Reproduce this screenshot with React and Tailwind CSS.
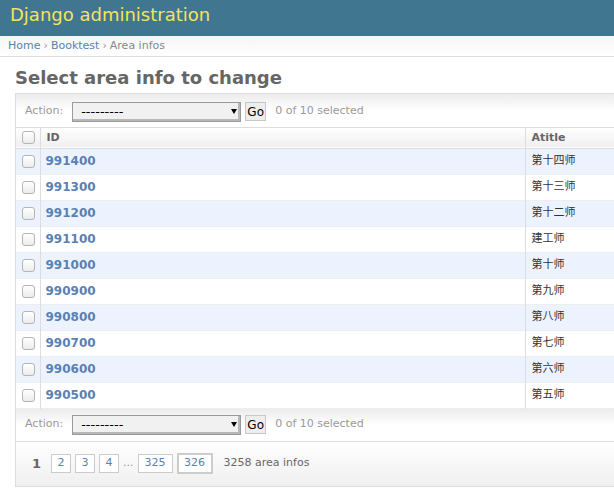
import React from 'react';

const rows = [
  ['991400', '第十四师'],
  ['991300', '第十三师'],
  ['991200', '第十二师'],
  ['991100', '建工师'],
  ['991000', '第十师'],
  ['990900', '第九师'],
  ['990800', '第八师'],
  ['990700', '第七师'],
  ['990600', '第六师'],
  ['990500', '第五师'],
];

const Check = () => (
  <div className="w-[13px] h-[13px] rounded-[3px] border border-[#b5b5b5] bg-gradient-to-b from-white to-[#ececec]" />
);

const Actions = ({ top }) => (
  <div className={`${top ? 'h-[34px] pt-[2px]' : 'h-[33px]'} flex items-center pl-[9px] bg-gradient-to-b from-[#ececec] via-white to-white border-b border-[#ddd]`}>
    <span className="text-[11px] text-[#999]">Action:</span>
    <div className="ml-[9px] w-[169px] h-[20px] flex items-center border border-[#9a9a9a] bg-[#f1f1f1] relative shadow-[inset_-2px_-2px_0_#b8b8b8]">
      <span className="pl-[8px] text-[13px] text-black leading-none">---------</span>
      <span className="absolute right-[3px] top-[6px] w-0 h-0 border-l-[3.5px] border-r-[3.5px] border-t-[5px] border-l-transparent border-r-transparent border-t-black" />
    </div>
    <div className="ml-[4px] w-[21px] h-[19px] flex items-center justify-center border border-[#c8c8c8] bg-[#eee] text-[12px] text-black">Go</div>
    <span className="ml-[9px] text-[11px] text-[#999]">0 of 10 selected</span>
  </div>
);

export default function App() {
  return (
    <div className="w-[614px] h-[491px] overflow-hidden bg-white font-['DejaVu_Sans','Noto_Sans_CJK_SC',sans-serif]">
      <div className="h-[36px] bg-[#417690] px-[10px] pt-[4px]">
        <h1 className="text-[18px] leading-[22px] text-[#f5e35d]">Django administration</h1>
      </div>
      <div className="h-[21px] px-[8px] flex items-center text-[11px] bg-gradient-to-b from-[#f5f5f5] to-white border-b border-[#ddd]">
        <span className="text-[#5b80b2] pt-[1px]">Home</span>
        <span className="text-[#999] mx-[3px] pt-[1px]">›</span>
        <span className="text-[#5b80b2] pt-[1px]">Booktest</span>
        <span className="text-[#999] mx-[3px] pt-[1px]">›</span>
        <span className="text-[#888] pt-[1px]">Area infos</span>
      </div>
      <div className="pl-[15px]">
        <h2 className="mt-[9px] mb-[4px] text-[18px] leading-[23px] font-bold text-[#666]">Select area info to change</h2>
        <div className="w-[700px] border border-[#ddd]">
          <Actions top />
          <table className="w-full border-collapse text-[11px]">
            <thead>
              <tr className="h-[20px] bg-gradient-to-b from-white to-[#efefef] border-b border-[#ddd]">
                <th className="w-[24px] pl-[6px] border-r border-[#ddd] align-middle"><Check /></th>
                <th className="w-[485px] text-left pl-[6px] font-bold text-[#666] border-r border-[#ddd]">ID</th>
                <th className="text-left pl-[6px] font-bold text-[#666]">Atitle</th>
              </tr>
            </thead>
            <tbody>
              {rows.map(([id, title], i) => (
                <tr key={id} className={`h-[26px] border-b border-[#eee] ${i % 2 === 0 ? 'bg-[#edf3fe]' : 'bg-white'}`}>
                  <td className="pl-[6px] border-r border-[#ddd] align-middle"><Check /></td>
                  <td className="pl-[5px] border-r border-[#ddd] text-[12px] font-bold text-[#5b80b2]">{id}</td>
                  <td className="pl-[6px] text-[#333]">{title}</td>
                </tr>
              ))}
            </tbody>
          </table>
          <Actions />
          <div className="h-[44px] flex items-center pl-[16px] text-[11px] bg-gradient-to-b from-white to-[#efefef]">
            <span className="font-bold text-[#666] text-[13px] mr-[10px]">1</span>
            {['2', '3', '4'].map((p) => (
              <span key={p} className="mr-[4px] h-[19px] w-[20px] flex items-center justify-center border border-[#ccc] bg-white text-[#5b80b2]">{p}</span>
            ))}
            <span className="text-[#999] mr-[4px]">...</span>
            <span className="mr-[4px] h-[19px] w-[35px] flex items-center justify-center border border-[#ccc] bg-white text-[#5b80b2]">325</span>
            <span className="mr-[11px] h-[21px] w-[36px] flex items-center justify-center border-2 border-[#ccc] bg-white text-[#5b80b2]">326</span>
            <span className="text-[11px] text-[#666]">3258 area infos</span>
          </div>
        </div>
      </div>
    </div>
  );
}
